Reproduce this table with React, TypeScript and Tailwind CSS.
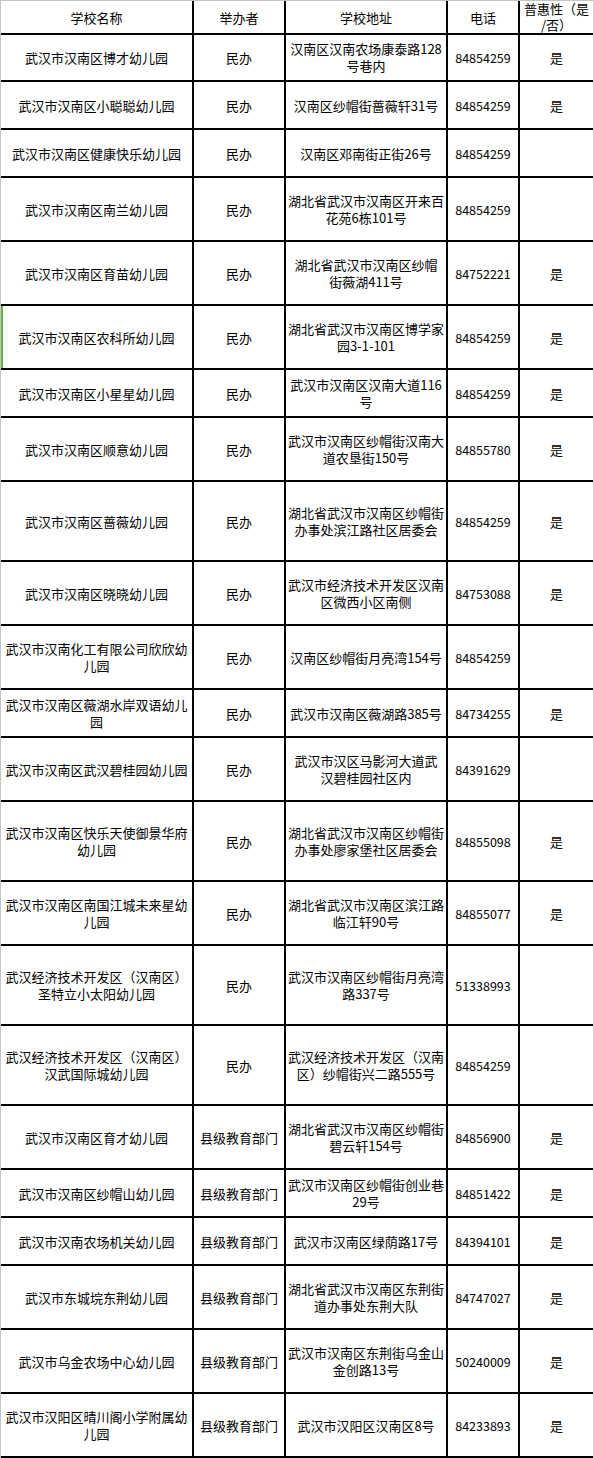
type Row = {
  name: string[];
  owner: string;
  addr: string[];
  phone: string;
  puhui: string;
  h: string;
  green?: boolean;
};

const rows: Row[] = [
  { name: ['武汉市汉南区博才幼儿园'], owner: '民办', addr: ['汉南区汉南农场康泰路128', '号巷内'], phone: '84854259', puhui: '是', h: 'h-[48px]' },
  { name: ['武汉市汉南区小聪聪幼儿园'], owner: '民办', addr: ['汉南区纱帽街蔷薇轩31号'], phone: '84854259', puhui: '是', h: 'h-[48px]' },
  { name: ['武汉市汉南区健康快乐幼儿园'], owner: '民办', addr: ['汉南区邓南街正街26号'], phone: '84854259', puhui: '', h: 'h-[48px]' },
  { name: ['武汉市汉南区南兰幼儿园'], owner: '民办', addr: ['湖北省武汉市汉南区开来百', '花苑6栋101号'], phone: '84854259', puhui: '', h: 'h-[64px]' },
  { name: ['武汉市汉南区育苗幼儿园'], owner: '民办', addr: ['湖北省武汉市汉南区纱帽', '街薇湖411号'], phone: '84752221', puhui: '是', h: 'h-[64px]' },
  { name: ['武汉市汉南区农科所幼儿园'], owner: '民办', addr: ['湖北省武汉市汉南区博学家', '园3-1-101'], phone: '84854259', puhui: '是', h: 'h-[64px]', green: true },
  { name: ['武汉市汉南区小星星幼儿园'], owner: '民办', addr: ['武汉市汉南区汉南大道116', '号'], phone: '84854259', puhui: '是', h: 'h-[48px]' },
  { name: ['武汉市汉南区顺意幼儿园'], owner: '民办', addr: ['武汉市汉南区纱帽街汉南大', '道农垦街150号'], phone: '84855780', puhui: '是', h: 'h-[64px]' },
  { name: ['武汉市汉南区蔷薇幼儿园'], owner: '民办', addr: ['湖北省武汉市汉南区纱帽街', '办事处滨江路社区居委会'], phone: '84854259', puhui: '是', h: 'h-[80px]' },
  { name: ['武汉市汉南区晓晓幼儿园'], owner: '民办', addr: ['武汉市经济技术开发区汉南', '区微西小区南侧'], phone: '84753088', puhui: '是', h: 'h-[64px]' },
  { name: ['武汉市汉南化工有限公司欣欣幼', '儿园'], owner: '民办', addr: ['汉南区纱帽街月亮湾154号'], phone: '84854259', puhui: '', h: 'h-[64px]' },
  { name: ['武汉市汉南区薇湖水岸双语幼儿', '园'], owner: '民办', addr: ['武汉市汉南区薇湖路385号'], phone: '84734255', puhui: '是', h: 'h-[48px]' },
  { name: ['武汉市汉南区武汉碧桂园幼儿园'], owner: '民办', addr: ['武汉市汉区马影河大道武', '汉碧桂园社区内'], phone: '84391629', puhui: '', h: 'h-[64px]' },
  { name: ['武汉市汉南区快乐天使御景华府', '幼儿园'], owner: '民办', addr: ['湖北省武汉市汉南区纱帽街', '办事处廖家堡社区居委会'], phone: '84855098', puhui: '是', h: 'h-[80px]' },
  { name: ['武汉市汉南区南国江城未来星幼', '儿园'], owner: '民办', addr: ['湖北省武汉市汉南区滨江路', '临江轩90号'], phone: '84855077', puhui: '是', h: 'h-[64px]' },
  { name: ['武汉经济技术开发区（汉南区）', '圣特立小太阳幼儿园'], owner: '民办', addr: ['武汉市汉南区纱帽街月亮湾', '路337号'], phone: '51338993', puhui: '', h: 'h-[80px]' },
  { name: ['武汉经济技术开发区（汉南区）', '汉武国际城幼儿园'], owner: '民办', addr: ['武汉经济技术开发区（汉南', '区）纱帽街兴二路555号'], phone: '84854259', puhui: '', h: 'h-[80px]' },
  { name: ['武汉市汉南区育才幼儿园'], owner: '县级教育部门', addr: ['湖北省武汉市汉南区纱帽街', '碧云轩154号'], phone: '84856900', puhui: '是', h: 'h-[64px]' },
  { name: ['武汉市汉南区纱帽山幼儿园'], owner: '县级教育部门', addr: ['武汉市汉南区纱帽街创业巷', '29号'], phone: '84851422', puhui: '是', h: 'h-[48px]' },
  { name: ['武汉市汉南农场机关幼儿园'], owner: '县级教育部门', addr: ['武汉市汉南区绿荫路17号'], phone: '84394101', puhui: '是', h: 'h-[48px]' },
  { name: ['武汉市东城垸东荆幼儿园'], owner: '县级教育部门', addr: ['湖北省武汉市汉南区东荆街', '道办事处东荆大队'], phone: '84747027', puhui: '是', h: 'h-[64px]' },
  { name: ['武汉市乌金农场中心幼儿园'], owner: '县级教育部门', addr: ['武汉市汉南区东荆街乌金山', '金创路13号'], phone: '50240009', puhui: '是', h: 'h-[64px]' },
  { name: ['武汉市汉阳区晴川阁小学附属幼', '儿园'], owner: '县级教育部门', addr: ['武汉市汉阳区汉南区8号'], phone: '84233893', puhui: '是', h: 'h-[64px]' },
];

const cell = 'flex flex-col items-center justify-center text-center border-b-2 border-black';

function Lines({ lines }: { lines: string[] }) {
  return (
    <>
      {lines.map((l, i) => (
        <span key={i} className="block whitespace-nowrap">
          {l}
        </span>
      ))}
    </>
  );
}

export default function App() {
  return (
    <div
      className="w-[593px] bg-white text-[13px] leading-[17px] text-black"
      style={{ fontFamily: '"Noto Sans CJK SC", "Noto Sans", sans-serif' }}
    >
      <div className="border-t border-l border-[#c4c4c4]">
        <div className="grid grid-cols-[193px_92px_162px_72px_73px] h-[33px]">
          <div className={`${cell} border-r-2`}>学校名称</div>
          <div className={`${cell} border-r-2`}>举办者</div>
          <div className={`${cell} border-r-2`}>学校地址</div>
          <div className={`${cell} border-r-2`}>电话</div>
          <div className={`${cell} leading-[16px]`}>
            <span className="block">普惠性（是</span>
            <span className="block">/否）</span>
          </div>
        </div>
        {rows.map((r, i) => (
          <div
            key={i}
            className={`grid grid-cols-[193px_92px_162px_72px_73px] ${r.h} ${
              r.green ? 'shadow-[inset_2px_0_0_#6fb24a]' : ''
            }`}
          >
            <div className={`${cell} border-r-2`}>
              <Lines lines={r.name} />
            </div>
            <div className={`${cell} border-r-2`}>{r.owner}</div>
            <div className={`${cell} border-r-2`}>
              <Lines lines={r.addr} />
            </div>
            <div className={`${cell} border-r-2 text-[12.5px]`}>{r.phone}</div>
            <div className={cell}>{r.puhui}</div>
          </div>
        ))}
      </div>
    </div>
  );
}
